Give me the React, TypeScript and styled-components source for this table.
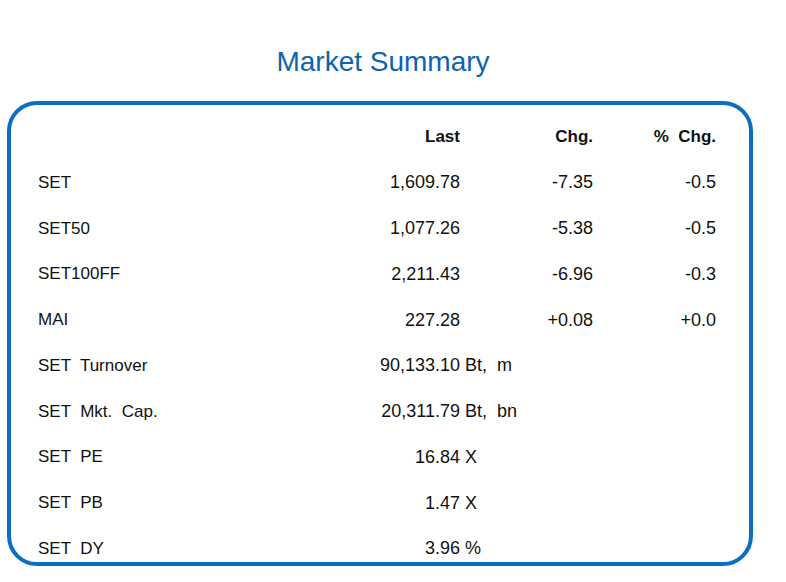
import { createGlobalStyle, styled } from "styled-components";

const GlobalStyle = createGlobalStyle`
  html, body {
    margin: 0;
    padding: 0;
    background: #ffffff;
  }
  body {
    font-family: "Liberation Sans", Arial, sans-serif;
    color: #111111;
  }
`;

type Row = {
  label: string;
  last: string;
  chg?: string;
  pct?: string;
  unit?: string;
};

const rows: Row[] = [
  { label: "SET", last: "1,609.78", chg: "-7.35", pct: "-0.5" },
  { label: "SET50", last: "1,077.26", chg: "-5.38", pct: "-0.5" },
  { label: "SET100FF", last: "2,211.43", chg: "-6.96", pct: "-0.3" },
  { label: "MAI", last: "227.28", chg: "+0.08", pct: "+0.0" },
  { label: "SET  Turnover", last: "90,133.10", unit: "Bt,  m" },
  { label: "SET  Mkt.  Cap.", last: "20,311.79", unit: "Bt,  bn" },
  { label: "SET  PE", last: "16.84", unit: "X" },
  { label: "SET  PB", last: "1.47", unit: "X" },
  { label: "SET  DY", last: "3.96", unit: "%" },
];

export default function App() {
  return (
    <>
      <GlobalStyle />
      <Page>
        <Title>Market Summary</Title>
        <Panel>
          <Table>
            <HeadCell />
            <HeadCell $right>Last</HeadCell>
            <HeadCell $right>Chg.</HeadCell>
            <HeadCell $right>%  Chg.</HeadCell>
            {rows.map((r) => (
              <RowGroup key={r.label} row={r} />
            ))}
          </Table>
        </Panel>
      </Page>
    </>
  );
}

const RowGroup = ({ row }: { row: Row }) => (
  <>
    <Label>{row.label}</Label>
    <Value $right>{row.last}</Value>
    {row.unit ? (
      <Unit>{row.unit}</Unit>
    ) : (
      <>
        <Value $right>{row.chg}</Value>
        <Value $right>{row.pct}</Value>
      </>
    )}
  </>
);

const Page = styled.div`
  width: 746px;
  margin-left: 7px;
  padding-top: 46px;
`;

const Title = styled.h1`
  margin: 0 0 23px;
  font-family: "Liberation Sans", Arial, sans-serif;
  font-size: 28px;
  line-height: 32px;
  font-weight: normal;
  text-align: center;
  color: #0c63b0;
  padding-left: 6px;
`;

const Panel = styled.div`
  box-sizing: border-box;
  height: 465px;
  border: 4px solid #0a6fc3;
  border-radius: 30px;
  padding: 9px 33px 0 27px;
`;

const Table = styled.div`
  display: grid;
  grid-template-columns: 1fr 140px 133px 123px;
  grid-auto-rows: 45.75px;
  grid-template-rows: 46px;
  align-items: center;
`;

const HeadCell = styled.div<{ $right?: boolean }>`
  font-size: 17px;
  font-weight: bold;
  white-space: pre;
  text-align: ${(p) => (p.$right ? "right" : "left")};
`;

const Label = styled.div`
  font-size: 17px;
  white-space: pre;
`;

const Value = styled.div<{ $right?: boolean }>`
  font-size: 18px;
  white-space: pre;
  text-align: ${(p) => (p.$right ? "right" : "left")};
`;

const Unit = styled.div`
  grid-column: span 2;
  font-size: 18px;
  white-space: pre;
  padding-left: 5px;
`;
